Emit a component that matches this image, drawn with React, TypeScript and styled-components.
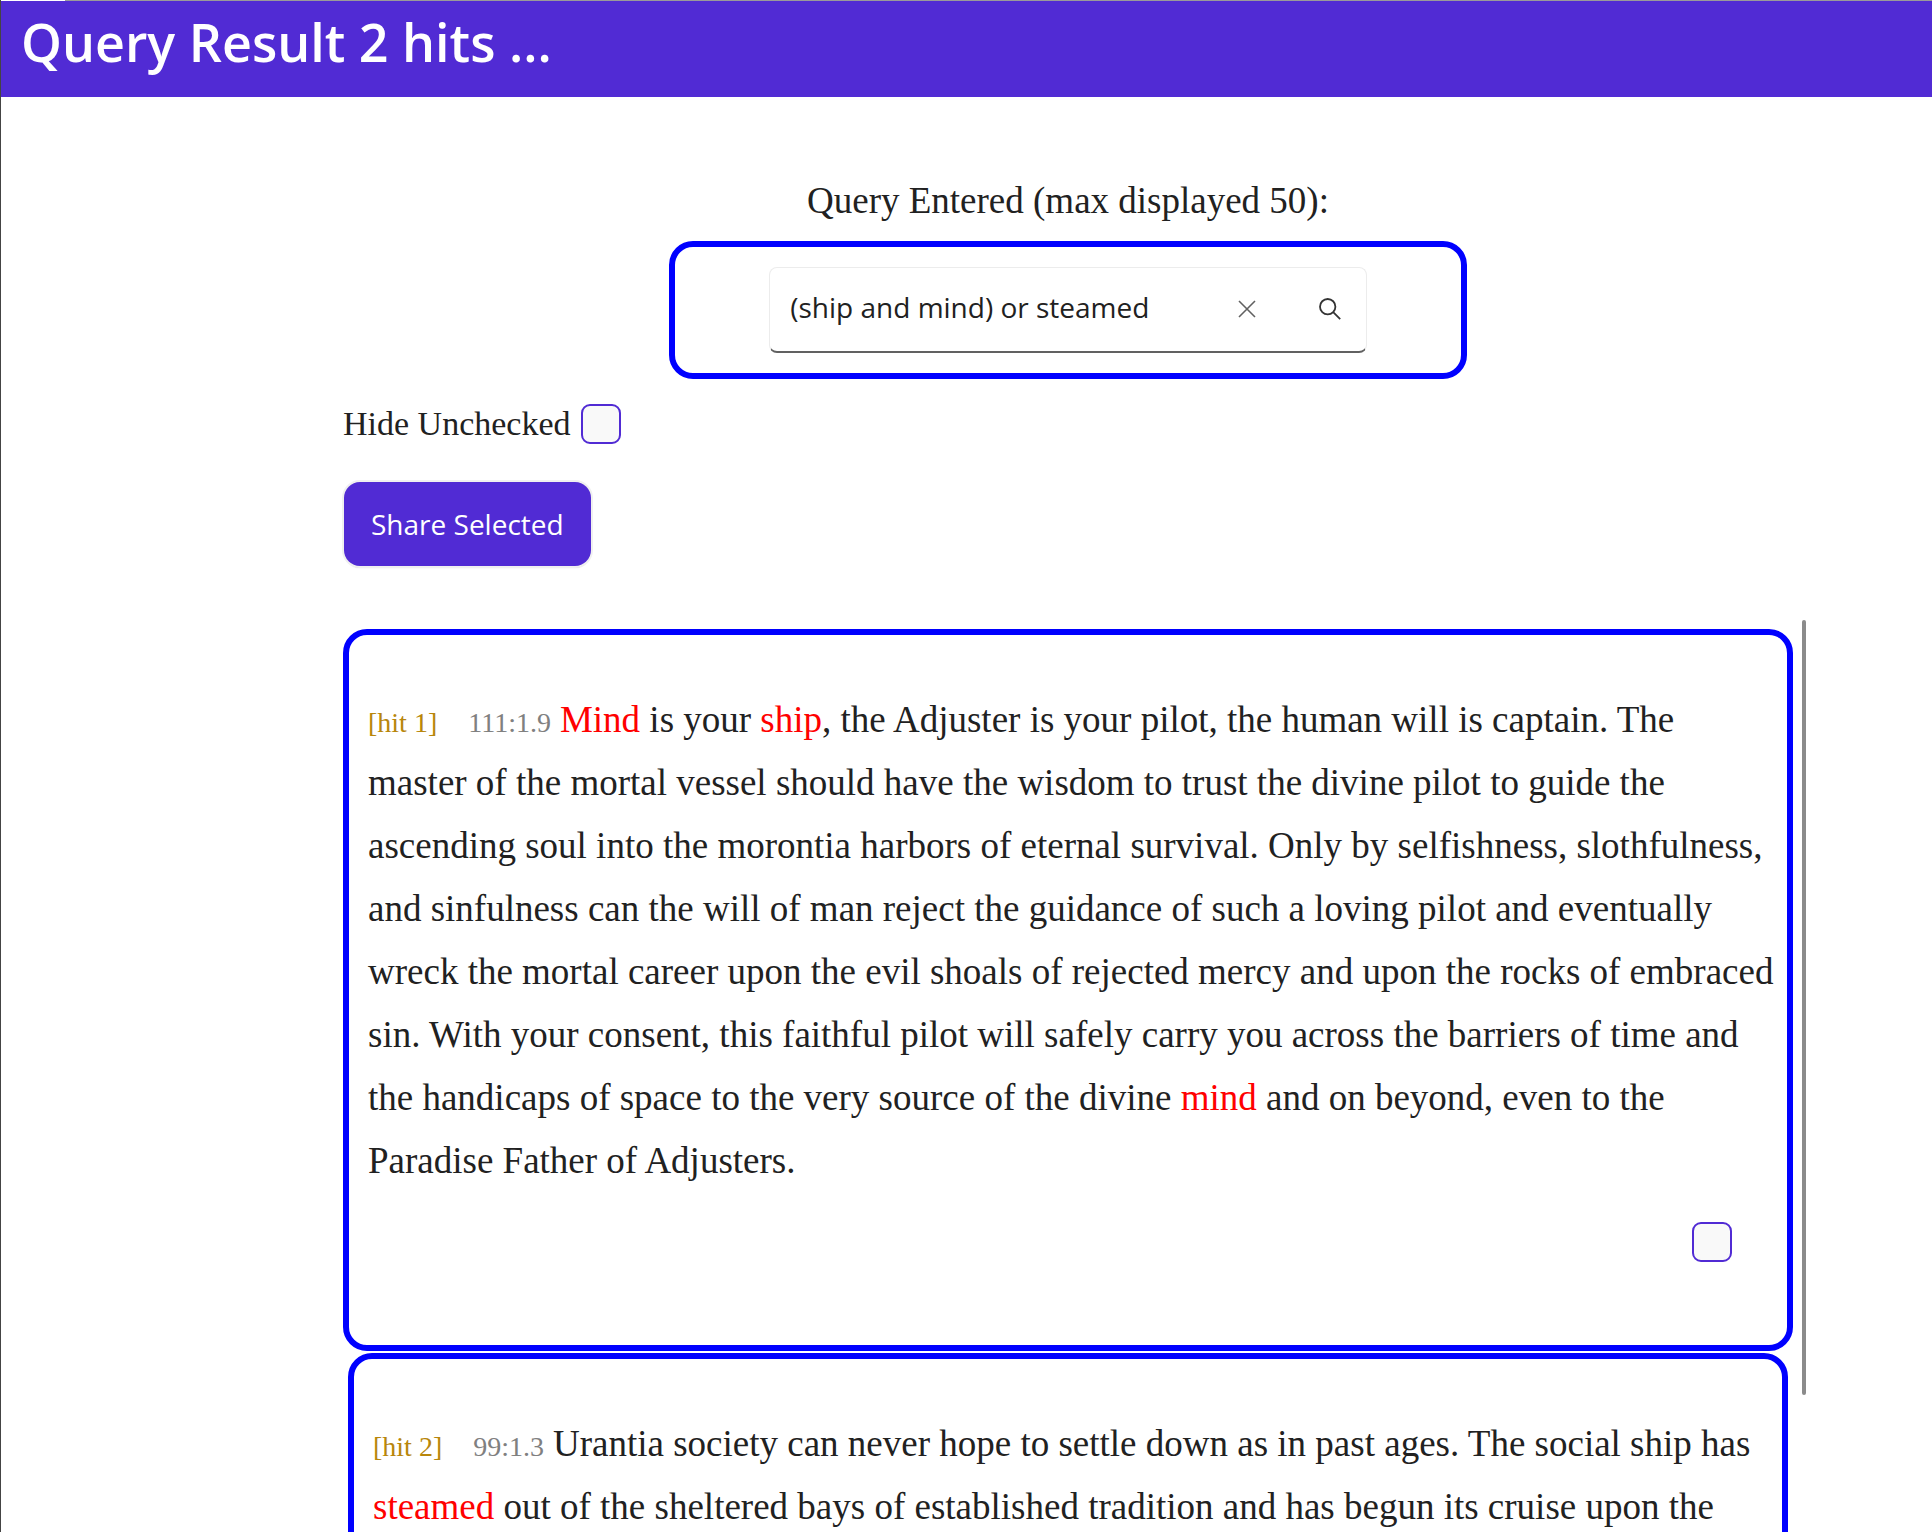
import React, { useState } from "react";
import styled, { createGlobalStyle } from "styled-components";

const PURPLE = "#512bd4";
const INK = "#212121";
const SERIF = `"Liberation Serif", "Times New Roman", serif`;
const SANS = `"Open Sans", "Noto Sans", sans-serif`;

const GlobalStyle = createGlobalStyle`
  *, *::before, *::after { box-sizing: border-box; }
  body { margin: 0; background: #fff; color: ${INK}; font-family: ${SERIF}; }
`;

const Page = styled.div`
  display: flex;
  flex-direction: column;
  height: 100vh;
  overflow: hidden;
  border-left: 1px solid #444;
`;

const TopEdge = styled.div`
  flex: none;
  height: 1px;
  background: linear-gradient(to right, #fff 64px, #9a9a9a 64px);
`;

const Header = styled.header`
  flex: none;
  height: 96px;
  padding: 5px 20px 0;
  background: ${PURPLE};
`;

const Title = styled.h1`
  margin: 0;
  color: #fff;
  font: 600 52px/72px ${SANS};
`;

const Main = styled.main`
  flex: 1;
  min-height: 0;
  display: flex;
  flex-direction: column;
  padding: 80px 126px 0 342px;
`;

const QueryForm = styled.form`
  display: flex;
  flex-direction: column;
  align-items: center;
  margin-right: 13px;
`;

const QueryLabel = styled.label`
  font-size: 37px;
  line-height: 48px;
  margin-bottom: 16px;
`;

const QueryFrame = styled.div`
  width: 55%;
  padding: 20px 94px;
  border: 6px solid #00f;
  border-radius: 24px;
`;

const SearchBar = styled.div`
  display: flex;
  align-items: center;
  height: 86px;
  border: 1px solid #ececec;
  border-bottom: 2px solid #616161;
  border-radius: 8px;
`;

const SearchInput = styled.input`
  flex: 1;
  min-width: 0;
  height: 100%;
  padding: 0 0 5px 20px;
  border: 0;
  outline: 0;
  background: none;
  color: ${INK};
  font: 28px ${SANS};
`;

const IconButton = styled.button`
  display: grid;
  place-items: center;
  width: 48px;
  height: 48px;
  margin: 0 12px 2px 23px;
  padding: 0;
  border: 0;
  background: none;
`;

const HideRow = styled.div`
  display: flex;
  align-items: center;
  gap: 10px;
  margin-top: 25px;
  font-size: 34px;
  line-height: 40px;
`;

const CheckBox = styled.input`
  appearance: none;
  flex: none;
  width: 40px;
  height: 40px;
  margin: 0;
  border: 2px solid ${PURPLE};
  border-radius: 9px;
  background: #f9f9f9;
  &:checked { background: ${PURPLE}; }
`;

const ShareButton = styled.button`
  flex: none;
  align-self: flex-start;
  height: 84px;
  margin: 38px 0 0 1px;
  padding: 0 27px;
  border: 0;
  border-radius: 16px;
  background: ${PURPLE};
  box-shadow: 0 0 0 2px #f0f0f0, 0 2px 1px #ccc;
  color: #fff;
  font: 28px ${SANS};
`;

const ResultList = styled.section`
  position: relative;
  flex: 1;
  min-height: 0;
  margin-top: 54px;
  padding: 9px 13px 0 0;
  overflow: hidden;
`;

const ScrollThumb = styled.div`
  position: absolute;
  top: 0;
  right: 0;
  width: 4px;
  height: 85%;
  border-radius: 2px;
  background: #8b8b8b;
`;

const Card = styled.article<{ $inset?: boolean }>`
  margin: 0 ${(p) => (p.$inset ? 5 : 0)}px 2px;
  padding: 53px 19px 83px;
  border: 6px solid #00f;
  border-radius: 24px;
`;

const Passage = styled.p`
  margin: 0;
  font-size: 37px;
  line-height: 63px;
`;

const Line = styled.span`
  display: block;
  white-space: nowrap;
`;

const Tag = styled.span<{ $color: string; $gap: number }>`
  margin-right: ${(p) => p.$gap}px;
  color: ${(p) => p.$color};
  font-size: 28px;
  line-height: 28px;
`;

const Match = styled.mark`
  background: none;
  color: #f00;
`;

const CardFooter = styled.div`
  display: flex;
  justify-content: flex-end;
  padding: 30px 36px 0 0;
`;

interface Hit {
  id: number;
  reference: string;
  lines: string[];
}

// Words wrapped in asterisks are search matches.
const hits: Hit[] = [
  {
    id: 1,
    reference: "111:1.9",
    lines: [
      "*Mind* is your *ship*, the Adjuster is your pilot, the human will is captain. The",
      "master of the mortal vessel should have the wisdom to trust the divine pilot to guide the",
      "ascending soul into the morontia harbors of eternal survival. Only by selfishness, slothfulness,",
      "and sinfulness can the will of man reject the guidance of such a loving pilot and eventually",
      "wreck the mortal career upon the evil shoals of rejected mercy and upon the rocks of embraced",
      "sin. With your consent, this faithful pilot will safely carry you across the barriers of time and",
      "the handicaps of space to the very source of the divine *mind* and on beyond, even to the",
      "Paradise Father of Adjusters.",
    ],
  },
  {
    id: 2,
    reference: "99:1.3",
    lines: [
      "Urantia society can never hope to settle down as in past ages. The social ship has",
      "*steamed* out of the sheltered bays of established tradition and has begun its cruise upon the",
    ],
  },
];

const highlight = (text: string) =>
  text.split("*").map((part, i) => (i % 2 ? <Match key={i}>{part}</Match> : part));

function HitCard({ hit }: { hit: Hit }) {
  return (
    <Card $inset={hit.id > 1}>
      <Passage>
        {hit.lines.map((line, i) => (
          <Line key={line}>
            {i === 0 && (
              <>
                <Tag $color="#b8860b" $gap={31}>[hit {hit.id}]</Tag>
                <Tag $color="#808080" $gap={9}>{hit.reference}</Tag>
              </>
            )}
            {highlight(line)}
          </Line>
        ))}
      </Passage>
      <CardFooter>
        <CheckBox type="checkbox" aria-label={`Select hit ${hit.id}`} />
      </CardFooter>
    </Card>
  );
}

export default function App() {
  const [query, setQuery] = useState("(ship and mind) or steamed");
  return (
    <>
      <GlobalStyle />
      <Page>
        <TopEdge />
        <Header>
          <Title>Query Result 2 hits ...</Title>
        </Header>
        <Main>
          <QueryForm onSubmit={(e) => e.preventDefault()}>
            <QueryLabel htmlFor="query">Query Entered (max displayed 50):</QueryLabel>
            <QueryFrame>
              <SearchBar>
                <SearchInput id="query" value={query} onChange={(e) => setQuery(e.target.value)} />
                <IconButton type="button" aria-label="Clear" onClick={() => setQuery("")}>
                  <svg width="18" height="18" viewBox="0 0 18 18" fill="none" stroke="#616161" strokeWidth="1.6">
                    <path d="M1 1 17 17M17 1 1 17" />
                  </svg>
                </IconButton>
                <IconButton type="submit" aria-label="Search">
                  <svg width="22" height="22" viewBox="0 0 22 22" fill="none" stroke="#333" strokeWidth="1.8">
                    <circle cx="8.7" cy="8.7" r="7.7" />
                    <path d="M14.2 14.2 21.2 21.2" />
                  </svg>
                </IconButton>
              </SearchBar>
            </QueryFrame>
          </QueryForm>
          <HideRow>
            <label htmlFor="hide">Hide Unchecked</label>
            <CheckBox id="hide" type="checkbox" />
          </HideRow>
          <ShareButton type="button">Share Selected</ShareButton>
          <ResultList aria-label="Results">
            {hits.map((hit) => (
              <HitCard key={hit.id} hit={hit} />
            ))}
            <ScrollThumb />
          </ResultList>
        </Main>
      </Page>
    </>
  );
}
